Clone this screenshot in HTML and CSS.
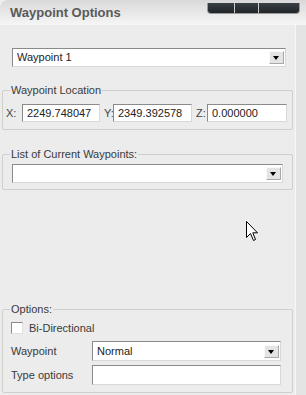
FILE: index.html
```html
<!DOCTYPE html>
<html lang="en">
  <head>
    <meta charset="UTF-8" />
    <title>Waypoint Options</title>
    <link rel="stylesheet" href="styles.css">
  </head>
  <body>
    <div class="window">
      <div class="titlebar">
        <span class="title">Waypoint Options</span>
        <div class="controls">
          <span class="ctl ctl-a"></span>
          <span class="ctl ctl-b"></span>
          <span class="ctl ctl-c"></span>
        </div>
      </div>
      <div class="body-row">
        <div class="panel">
          <div class="combo combo-top">
            <span class="combo-text">Waypoint 1</span>
            <span class="combo-btn"></span>
          </div>

          <fieldset class="group group-loc">
            <legend>Waypoint Location</legend>
            <div class="coords">
              <label class="coord-label first">X:</label>
              <input class="field" type="text" value="2249.748047" />
              <label class="coord-label">Y:</label>
              <input class="field" type="text" value="2349.392578" />
              <label class="coord-label">Z:</label>
              <input class="field" type="text" value="0.000000" />
            </div>
          </fieldset>

          <fieldset class="group group-list">
            <legend>List of Current Waypoints:</legend>
            <div class="combo">
              <span class="combo-text"></span>
              <span class="combo-btn"></span>
            </div>
          </fieldset>

          <div class="spacer"></div>

          <fieldset class="group group-opts">
            <legend>Options:</legend>
            <div class="check-row">
              <span class="checkbox"></span>
              <span>Bi-Directional</span>
            </div>
            <div class="opt-row">
              <span class="opt-label">Waypoint</span>
              <div class="combo combo-opt">
                <span class="combo-text">Normal</span>
                <span class="combo-btn"></span>
              </div>
            </div>
            <div class="opt-row opt-row-last">
              <span class="opt-label">Type options</span>
              <input class="field field-opt" type="text" value="" />
            </div>
          </fieldset>
        </div>
        <div class="strip"></div>
      </div>

      <svg class="cursor" width="13" height="21" viewBox="0 0 13 21">
        <path d="M0.5 0.5 L0.5 16.5 L4.5 12.5 L7.5 19.5 L9.5 18.5 L6.8 11.8 L11.5 11.8 Z" fill="#fff" stroke="#000" stroke-width="1" />
      </svg>
    </div>
  </body>
</html>
```

FILE: styles.css
```css
* {
  margin: 0;
  padding: 0;
  box-sizing: border-box;
}
html, body {
  height: 100%;
  overflow: hidden;
}
body {
  background: #eeefee;
  font-family: "Liberation Sans", Arial, sans-serif;
  font-size: 11px;
  color: #3a3a3a;
}
.window {
  position: relative;
  width: 306px;
  height: 395px;
  display: flex;
  flex-direction: column;
}
.titlebar {
  height: 25px;
  display: flex;
  justify-content: space-between;
  align-items: flex-start;
  background: linear-gradient(#d9d9d9, #f6f6f6);
  border-top-left-radius: 8px;
}
.title {
  font-size: 13px;
  font-weight: bold;
  color: #5a5a5a;
  padding: 5px 0 0 10px;
  line-height: 15px;
}
.controls {
  display: flex;
  margin: 3px 6px 0 0;
  height: 11px;
  border: 1px solid #9a9a9a;
  border-top: none;
  border-radius: 0 0 4px 4px;
  overflow: hidden;
  background: linear-gradient(#3a4146, #1f2428);
}
.ctl {
  height: 100%;
  border-left: 1px solid #c8c8c8;
}
.ctl-a {
  width: 26px;
  border-left: none;
}
.ctl-b {
  width: 24px;
}
.ctl-c {
  width: 41px;
}
.body-row {
  flex: 1;
  display: flex;
}
.panel {
  width: 296px;
  background: #ebeceb;
  display: flex;
  flex-direction: column;
  padding-top: 23px;
  border-right: 1px solid #f7f7f7;
}
.strip {
  flex: 1;
  background: #e3e5e4;
}
.combo {
  height: 19px;
  display: flex;
  align-items: center;
  justify-content: space-between;
  background: #fff;
  border: 1px solid;
  border-color: #8a8a8a #d8d8d8 #d8d8d8 #8a8a8a;
  padding: 0 1px 0 4px;
}
.combo-top {
  margin: 0 9px 0 12px;
}
.combo-text {
  line-height: 13px;
  color: #222;
}
.combo-btn {
  width: 15px;
  height: 13px;
  background: #e4e4e4;
  border: 1px solid;
  border-color: #fafafa #a8a8a8 #a8a8a8 #fafafa;
  position: relative;
}
.combo-btn::after {
  content: "";
  position: absolute;
  left: 3px;
  top: 4px;
  border-left: 3.5px solid transparent;
  border-right: 3.5px solid transparent;
  border-top: 4px solid #000;
}
.group {
  border: 1px solid #cfd0c9;
  border-radius: 2px;
  margin: 0 2px;
}
.group legend {
  padding: 0 1px;
  line-height: 13px;
  color: #3a3a3a;
}
.group-loc {
  margin-top: 17px;
  padding: 7px 3px 7px 3px;
}
.group-loc legend {
  margin-left: 4px;
}
.coords {
  display: grid;
  grid-template-columns: 16px 78px 13px 79px 15px 80px;
  align-items: center;
}
.coord-label {
  padding-left: 4px;
  color: #444;
}
.coord-label.first {
  padding-left: 0;
}
.field {
  height: 18px;
  width: 100%;
  font: inherit;
  color: #222;
  background: #fff;
  border: 1px solid;
  border-color: #8a8a8a #d8d8d8 #d8d8d8 #8a8a8a;
  padding: 0 4px;
  outline: none;
}
.group-list {
  margin-top: 18px;
  padding: 3px 9px 6px 9px;
}
.group-list legend {
  margin-left: -2px;
}
.spacer {
  flex: 1;
}
.group-opts {
  margin-bottom: 2px;
  padding: 5px 11px 7px 8px;
}
.group-opts legend {
  margin-left: -1px;
}
.check-row {
  display: flex;
  align-items: center;
  gap: 6px;
  height: 13px;
}
.checkbox {
  width: 12px;
  height: 12px;
  background: #fff;
  border: 1px solid;
  border-color: #8a8a8a #e0e0e0 #e0e0e0 #8a8a8a;
}
.opt-row {
  display: flex;
  align-items: center;
  margin-top: 7px;
}
.opt-row-last {
  margin-top: 4px;
}
.opt-label {
  width: 81px;
  color: #3a3a3a;
}
.combo-opt {
  flex: 1;
  height: 20px;
}
.field-opt {
  flex: 1;
  height: 20px;
}
.cursor {
  position: absolute;
  left: 246px;
  top: 221px;
}
```
